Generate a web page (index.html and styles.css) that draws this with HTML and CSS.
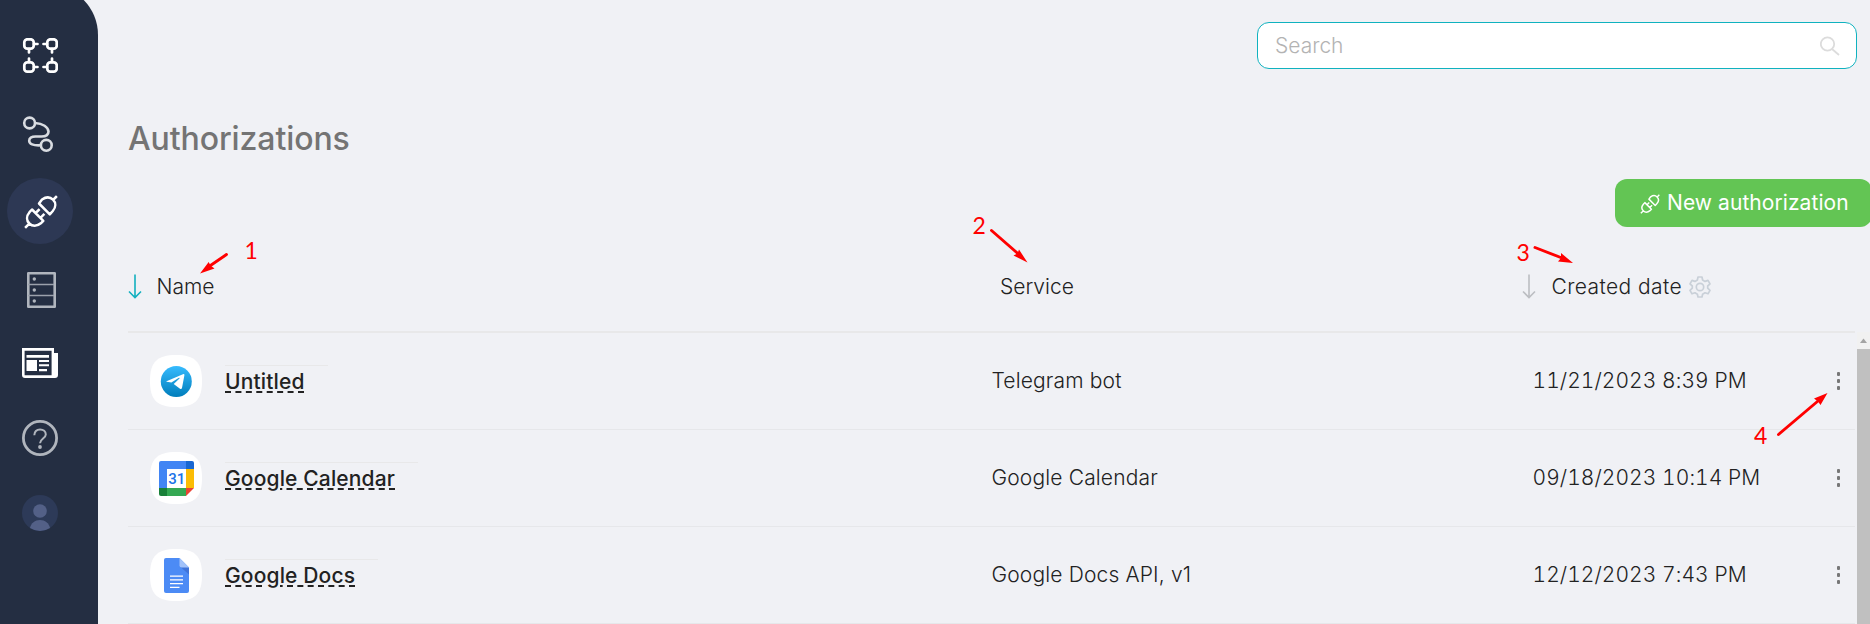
FILE: index.html
```html
<!DOCTYPE html>
<html lang="en">
<head>
<meta charset="utf-8">
<title>Authorizations</title>
<link rel="stylesheet" href="styles.css">
</head>
<body>
<svg class="defs" width="0" height="0">
  <defs>
    <symbol id="plug" viewBox="0 0 36 36">
      <g fill="none" stroke="currentColor" stroke-width="2.500" stroke-linecap="square" stroke-linejoin="round">
        <path d="M4 34l3.300-3.300M31.300 6.700L34 4M17 10.500L27.800 21.300l3-3.300c3.300-3.800 3.200-8.300.2-11.300s-7.200-2.800-11-.2zM10 16.500L21.300 27.800l-2.500 2.500c-3.800 3.300-8.500 3.200-11.500.2s-3-7.500.2-11.300zM13.700 20l3-3M18.500 24.800l3-3"/>
      </g>
    </symbol>
    <symbol id="down" viewBox="0 0 14 25">
      <path d="M7 .5v22.500M1 17.500l6 6 6-6" fill="none" stroke="currentColor" stroke-width="1.600"/>
    </symbol>
  </defs>
</svg>
<div class="app">
  <nav class="sidebar">
    <a class="nav-item"><svg width="36" height="36" viewBox="0 0 36 36" fill="none" stroke="#fff" stroke-width="2.700" stroke-linecap="round"><rect x="2.300" y="1.300" width="9.400" height="9.400" rx="3"/><rect x="25.300" y="1.300" width="9.400" height="9.400" rx="3"/><rect x="2.300" y="24.300" width="9.400" height="9.400" rx="3"/><rect x="25.300" y="24.300" width="9.400" height="9.400" rx="3"/><path d="M12 6h3.500M21.500 6H25M12 29h3.500M21.500 29H25M7 11v3.500M7 20.500V24M30 11v3.500M30 20.500V24"/></svg></a>
    <a class="nav-item"><svg width="36" height="38" viewBox="0 0 36 38" fill="none" stroke="#d9dce1" stroke-width="2.600"><circle cx="7.600" cy="8" r="5.400"/><circle cx="24.300" cy="30.300" r="5.400"/><path d="M13 8c8 .5 13 4 13.500 8.500c0 4-3 5-7 5h-6c-4 0-6.300 1.500-6.300 4.300c0 3.200 3.800 4.900 11.500 4.500"/></svg></a>
    <a class="nav-item nav-item--active"><svg width="36" height="36"><use href="#plug"/></svg></a>
    <a class="nav-item"><svg width="36" height="38" viewBox="0 0 36 38"><path fill="none" stroke="#b0b5bd" stroke-width="2.600" stroke-linejoin="round" d="M6.300 2.300h26.400v33.400H6.300z"/><path stroke="#9ba1ab" stroke-width="1.700" d="M6 13.500h26M6 24.500h26"/><g fill="#b0b5bd"><circle cx="12.300" cy="8" r="1.700"/><circle cx="12.300" cy="19" r="1.700"/><circle cx="12.300" cy="30" r="1.700"/></g></svg></a>
    <a class="nav-item"><svg width="36" height="30" viewBox="0 0 36 30"><path fill="#fff" fill-rule="evenodd" d="M0 0h32v5h4v22q0 3-3 3H3q-3 0-3-3zM2.600 2.700v24.600h27V2.700z"/><path fill="#fff" d="M4.500 7H27v2.700H4.500zM4.500 12H15v11H4.500zM17 12h10v2H17zM17 16.300h10v2H17zM17 21h8v2.200h-8z"/></svg></a>
    <a class="nav-item"><svg width="36" height="36" viewBox="0 0 36 36" fill="none" stroke="#b0b5bd"><circle cx="18" cy="18" r="16.600" stroke-width="2.800"/><path stroke-width="2" d="M12.300 15.200c.2-3.700 2.500-5.700 5.800-5.700s5.700 2 5.700 5c0 4-5.800 4.200-5.800 8.800"/><circle cx="18" cy="27" r="1.900" fill="#b0b5bd" stroke="none"/></svg></a>
    <a class="nav-item"><svg width="36" height="36" viewBox="0 0 36 36"><circle cx="18" cy="18" r="18" fill="#2d3a58"/><circle cx="18" cy="16" r="6.800" fill="#536087"/><path fill="#536087" d="M8 33c1-5 5-8 10-8s9 3 10 8q-10 6-20 0z"/></svg></a>
  </nav>
  <main class="main">
    <label class="search"><input class="search-input" type="text" placeholder="Search"><svg width="20" height="20" viewBox="0 0 20 20" fill="none" stroke="#dcdcdc" stroke-width="1.800"><circle cx="7.500" cy="8" r="6.700"/><path d="M12 13l7 6"/></svg></label>
    <h1 class="title">Authorizations</h1>
    <button class="new-button"><svg width="21" height="21"><use href="#plug"/></svg><span>New authorization</span></button>
    <section class="table">
      <header class="grid table-head">
        <div class="head-cell head-cell--name"><svg class="sorted" width="14" height="25"><use href="#down"/></svg><span>Name</span></div>
        <div class="head-cell head-cell--service">Service</div>
        <div class="head-cell head-cell--date"><svg class="unsorted" width="14" height="25"><use href="#down"/></svg><span>Created date</span><svg class="gear" width="22" height="22" viewBox="0 0 22 22" fill="none" stroke="#c9d0d8" stroke-width="1.700" stroke-linejoin="round"><path d="M9 1h4l.6 3 2.400 1.400 3-1 2 3.500L18.700 10v2.200L21 14.300l-2 3.500-3-1-2.400 1.400L13 21H9l-.6-2.800L6 16.800l-3 1-2-3.500 2.300-2.100V10L1 7.900l2-3.500 3 1L8.400 4z"/><circle cx="11" cy="11" r="3.700"/></svg></div>
      </header>
      <div class="grid row">
        <div class="name-cell"><span class="tile"><svg width="52" height="52" viewBox="0 0 52 52"><defs><linearGradient id="sky" x1="0" y1="0" x2="0" y2="1"><stop stop-color="#37bbfe"/><stop offset="1" stop-color="#007dbb"/></linearGradient></defs><path d="M26 0C45 0 52 7 52 26S45 52 26 52 0 45 0 26 7 0 26 0z" fill="#fff"/><circle cx="26.300" cy="26.500" r="15.500" fill="url(#sky)"/><path fill="#fff" d="M16.500 26.200l17-7.200q1.200 0 .9 1.300L32 33q-.5 1.400-2 .7l-6.300-4.800 5.800-5.500q.5-1-.6-.6l-7.500 4.800-4.700-.8q-.8-.3-.2-.6z"/></svg></span><div class="name-box"><a class="name-link">Untitled</a></div></div>
        <div class="service-cell">Telegram bot</div><div class="date-cell">11/21/2023 8:39 PM</div>
        <div class="menu"><i></i><i></i><i></i></div>
      </div>
      <div class="grid row">
        <div class="name-cell"><span class="tile"><svg width="52" height="52" viewBox="0 0 52 52"><path d="M26 0C45 0 52 7 52 26S45 52 26 52 0 45 0 26 7 0 26 0z" fill="#fff"/><path fill="#4285f4" d="M11 9h25v8H17v19H9V11q0-2 2-2z"/><path fill="#1967d2" d="M36 9h6q2 0 2 2v6h-8z"/><path fill="#fbbc04" d="M36 17h8v19h-8z"/><path fill="#34a853" d="M17 36h19v8H17z"/><path fill="#188038" d="M9 36h8v8h-6q-2 0-2-2z"/><path fill="#ea4335" d="M36 36h8l-8 8z"/><text class="calendar-day" x="26.700" y="31.500">31</text></svg></span><div class="name-box"><a class="name-link">Google Calendar</a></div></div>
        <div class="service-cell">Google Calendar</div><div class="date-cell">09/18/2023 10:14 PM</div>
        <div class="menu"><i></i><i></i><i></i></div>
      </div>
      <div class="grid row">
        <div class="name-cell"><span class="tile"><svg width="52" height="52" viewBox="0 0 52 52"><path d="M26 0C45 0 52 7 52 26S45 52 26 52 0 45 0 26 7 0 26 0z" fill="#fff"/><path fill="#4c8bf5" d="M16 9h13.500l9.500 9.500V42q0 2-2 2H16q-2 0-2-2V11q0-2 2-2z"/><path fill="#3f73d8" d="M30 17.500l9 8v-7z"/><path fill="#a1c2fa" d="M29.500 9l9.500 9.500h-7.500q-2 0-2-2z"/><path stroke="#fff" stroke-width="1.300" d="M20 27.200h13M20 30.900h13M20 34.600h13M20 38.300h9.500"/></svg></span><div class="name-box"><a class="name-link">Google Docs</a></div></div>
        <div class="service-cell">Google Docs API, v1</div><div class="date-cell">12/12/2023 7:43 PM</div>
        <div class="menu"><i></i><i></i><i></i></div>
      </div>
    </section>
  </main>
  <div class="scrollbar"><svg width="13" height="17" viewBox="0 0 13 17"><path fill="#a3a3a3" d="M3 11l3.500-4.500L10 11z"/></svg><div class="thumb"></div></div>
  <svg class="notes" width="1870" height="624" viewBox="0 0 1870 624">
    <g stroke="#f00" stroke-width="2.900" stroke-linecap="round"><path d="M226.500 254.500L209 266.500M991.500 230.500L1019 254.500M1535 247.500L1562 258M1778.500 434.500L1818 401"/></g>
    <g fill="#f00"><path d="M200 273.500L208.700 262 210.500 265.500 214.500 268.500z"/><path d="M1027.500 262.500L1013.500 255.500 1017.500 253.500 1019 249.500z"/><path d="M1573 263L1558 261.500 1561 258 1561 253z"/><path d="M1827.500 393L1820.500 405 1818 401.500 1814 398.500z"/></g>
    <g class="note-number"><text x="244.500" y="259">1</text><text x="972.500" y="234">2</text><text x="1516.500" y="261">3</text><text x="1754" y="444">4</text></g>
  </svg>
</div>
</body>
</html>
```
FILE: styles.css
```css
* { box-sizing: border-box; }
body { margin: 0; overflow: hidden; background: #f0f1f5; font-family: Inter, "Liberation Sans", sans-serif; color: #222; }
.defs { position: absolute; }
.app { position: relative; display: flex; width: 1870px; height: 624px; overflow: hidden; }
.sidebar { display: flex; flex-direction: column; align-items: center; flex: 0 0 98px; height: 654px; margin-top: -15px; padding: 33px 18px 0 0; background: #242e42; border-radius: 0 50px 0 0; }
.nav-item { display: flex; align-items: center; justify-content: center; width: 66px; height: 76px; color: #fff; }
.nav-item:nth-child(2) { height: 80px; }
.nav-item--active { height: 66px; margin: 4px 0 5px; border-radius: 50%; background: #2d3854; }
.nav-item svg { display: block; }
.nav-item:nth-child(4) { height: 82px; }
.nav-item:nth-child(5) { height: 64px; }
.nav-item:nth-child(6) { height: 86px; }
.nav-item:nth-child(7) { height: 64px; }
.main { flex: 1; display: flex; flex-direction: column; min-width: 0; padding: 22px 15px 0 30px; }
.search { display: flex; align-items: center; align-self: flex-end; width: 600px; height: 47px; margin-right: -2px; padding: 0 16px 0 17px; background: #fff; border: 1px solid #10b2bf; border-radius: 12px; }
.search-input { flex: 1; min-width: 0; padding: 0; border: 0; outline: 0; background: none; font: 300 21px/24px Inter, sans-serif; }
.search-input::placeholder { color: #b3b3b3; opacity: 1; }
.title { margin: 50px 0 0; font-size: 32px; line-height: 40px; font-weight: 460; letter-spacing: -.1px; color: #747474; }
.new-button { display: flex; align-items: center; align-self: flex-end; width: 257px; height: 48px; margin: 20px -17px 0 0; padding: 0 0 0 24px; gap: 7px; border: 0; border-radius: 12px; background: #63c554; color: #fff; font: 400 21px/24px Inter, sans-serif; letter-spacing: .07px; white-space: nowrap; }
.table { margin-top: 22px; }
.grid { display: grid; grid-template-columns: 863.5px 541px 1fr 34px; align-items: center; }
.table-head { height: 84px; border-bottom: 2px solid #e8e8e9; font-size: 21px; line-height: 24px; font-weight: 300; white-space: nowrap; }
.head-cell { display: flex; align-items: center; height: 24px; margin-bottom: 7px; }
.head-cell--name { gap: 15px; }
.head-cell--service { padding-left: 8.5px; }
.head-cell--date { margin-left: -10.5px; gap: 15.5px; letter-spacing: .4px; }
.gear { margin-left: -8px; }
.sorted { color: #13b0bf; margin-left: -.5px; }
.unsorted { color: #bcbec2; }
.row { height: 97px; border-bottom: 1px solid #e6e7ea; font-size: 21px; line-height: 24px; font-weight: 300; }
.name-cell { display: flex; align-items: center; padding-left: 22px; gap: 23px; }
.tile, .tile svg { display: block; }
.calendar-day { fill: #1a73e8; font: 500 15px Roboto, sans-serif; text-anchor: middle; }
.name-box { padding: 4px 23px 1px 0; margin-top: -3px; border-top: 1px solid #e8e8e9; }
.name-link { font-weight: 500; letter-spacing: .14px; text-decoration: underline dashed 2px; text-underline-offset: 2.5px; }
.service-cell { letter-spacing: .15px; }
.date-cell { letter-spacing: .06px; font-variant-numeric: tabular-nums; }
.menu { display: flex; flex-direction: column; align-items: center; gap: 3px; width: 3px; margin: -1px 0 0 16px; }
.menu i { width: 3px; height: 4px; border-radius: 1px; background: #777; }
.scrollbar { flex: 0 0 13px; margin: 332px 0 0 -13px; display: flex; flex-direction: column; background: #f1f1f1; }
.scrollbar svg { display: block; flex: none; }
.thumb { flex: 1; background: #c0c0c0; }
.notes { position: absolute; inset: 0; pointer-events: none; }
.note-number { fill: #f00; font: 400 23px Lato, sans-serif; }
```
